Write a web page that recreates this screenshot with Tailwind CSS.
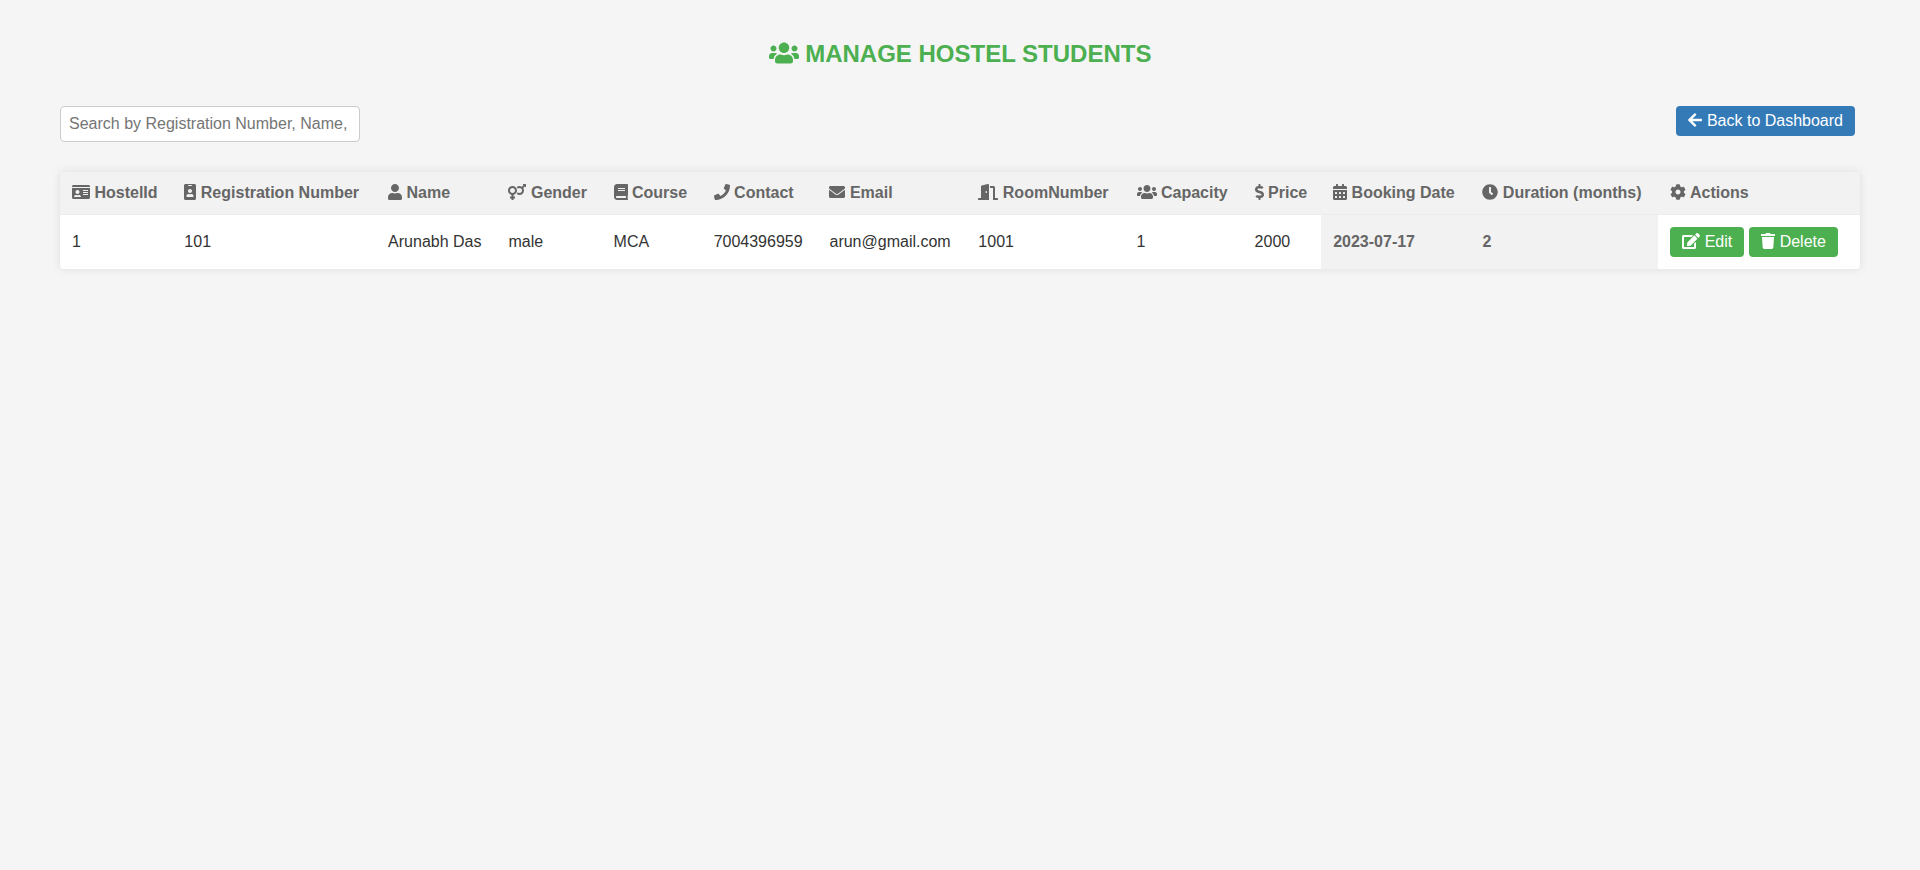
<!DOCTYPE html>
<html lang="en">
<head>
<meta charset="utf-8">
<title>Manage Hostel Students</title>
<script src="https://cdn.jsdelivr.net/npm/@tailwindcss/browser@4"></script>
</head>
<body class="min-h-screen bg-[#f5f5f5] px-[60px] pt-10 font-['Liberation_Sans',Arial,sans-serif] text-base leading-[18px] text-[#333]">
<svg class="hidden" aria-hidden="true">
<symbol id="users" viewBox="0 0 640 512"><path d="M96 224c35.3 0 64-28.7 64-64s-28.7-64-64-64-64 28.7-64 64 28.7 64 64 64zm448 0c35.3 0 64-28.7 64-64s-28.7-64-64-64-64 28.7-64 64 28.7 64 64 64zm32 32h-64c-17.6 0-33.5 7.1-45.1 18.6 40.3 22.1 68.9 62 75.1 109.4h66c17.7 0 32-14.3 32-32v-32c0-35.3-28.7-64-64-64zm-256 0c61.9 0 112-50.1 112-112S381.9 32 320 32 208 82.1 208 144s50.1 112 112 112zm76.8 32h-8.3c-20.8 10-43.9 16-68.5 16s-47.6-6-68.5-16h-8.3C179.6 288 128 339.6 128 403.2V432c0 26.5 21.5 48 48 48h288c26.5 0 48-21.5 48-48v-28.8c0-63.6-51.6-115.2-115.2-115.2zm-223.7-13.4C161.5 263.1 145.6 256 128 256H64c-35.3 0-64 28.7-64 64v32c0 17.7 14.3 32 32 32h65.9c6.3-47.4 34.9-87.3 75.2-109.4z"/></symbol>
<symbol id="id-card" viewBox="0 0 576 512"><path d="M528 32H48C21.5 32 0 53.5 0 80v16h576V80c0-26.5-21.5-48-48-48zM0 432c0 26.5 21.5 48 48 48h480c26.5 0 48-21.5 48-48V128H0v304zm352-232c0-4.400 3.600-8 8-8h144c4.400 0 8 3.600 8 8v16c0 4.400-3.600 8-8 8H360c-4.400 0-8-3.600-8-8v-16zm0 64c0-4.400 3.600-8 8-8h144c4.400 0 8 3.600 8 8v16c0 4.400-3.600 8-8 8H360c-4.400 0-8-3.600-8-8v-16zm0 64c0-4.400 3.600-8 8-8h144c4.400 0 8 3.600 8 8v16c0 4.400-3.600 8-8 8H360c-4.400 0-8-3.600-8-8v-16zM176 192c35.300 0 64 28.700 64 64s-28.700 64-64 64-64-28.700-64-64 28.700-64 64-64zM67.100 396.200C75.500 370.500 99.600 352 128 352h8.200c12.300 5.100 25.700 8 39.800 8s27.600-2.900 39.800-8h8.200c28.400 0 52.500 18.500 60.900 44.200 3.200 9.900-5.200 19.800-15.600 19.800H82.700c-10.400 0-18.800-10-15.600-19.800z"/></symbol>
<symbol id="id-badge" viewBox="0 0 384 512"><path d="M336 0H48C21.5 0 0 21.5 0 48v416c0 26.5 21.5 48 48 48h288c26.5 0 48-21.5 48-48V48c0-26.5-21.5-48-48-48zM144 32h96c8.800 0 16 7.200 16 16s-7.200 16-16 16h-96c-8.800 0-16-7.200-16-16s7.200-16 16-16zm48 128c35.300 0 64 28.700 64 64s-28.700 64-64 64-64-28.700-64-64 28.700-64 64-64zm112 236.800c0 10.600-10 19.200-22.400 19.200H102.400C90 416 80 407.400 80 396.800v-19.200c0-31.800 30.100-57.600 67.200-57.600h5c12.300 5.100 25.700 8 39.800 8s27.600-2.900 39.800-8h5c37.100 0 67.200 25.800 67.200 57.600v19.200z"/></symbol>
<symbol id="user" viewBox="0 0 448 512"><path d="M224 256c70.7 0 128-57.3 128-128S294.7 0 224 0 96 57.3 96 128s57.3 128 128 128zm89.6 32h-16.7c-22.2 10.2-46.9 16-72.9 16s-50.6-5.8-72.9-16h-16.7C60.2 288 0 348.2 0 422.4V464c0 26.5 21.5 48 48 48h352c26.5 0 48-21.5 48-48v-41.6c0-74.2-60.2-134.4-134.4-134.4z"/></symbol>
<symbol id="venus-mars" viewBox="0 0 576 512"><path d="M564 0h-79c-10.7 0-16 12.9-8.5 20.5l16.9 16.9-48.7 48.7C422.5 72.1 396.2 64 368 64c-33.7 0-64.6 11.6-89.2 30.9 14 16.7 25 36 32.1 57.1 14.5-14.8 34.7-24 57.1-24 44.1 0 80 35.9 80 80s-35.9 80-80 80c-22.3 0-42.6-9.2-57.1-24-7.1 21.1-18 40.4-32.1 57.1 24.5 19.4 55.5 30.9 89.2 30.9 79.5 0 144-64.5 144-144 0-28.2-8.1-54.500-22.100-76.700l48.700-48.700 16.900 16.900c2.400 2.400 5.400 3.500 8.400 3.500 6.200 0 12.100-4.800 12.100-12V12c0-6.600-5.400-12-12-12zM144 64C64.500 64 0 128.500 0 208c0 68.500 47.900 125.900 112 140.400V400H76c-6.600 0-12 5.400-12 12v40c0 6.600 5.400 12 12 12h36v36c0 6.600 5.400 12 12 12h40c6.600 0 12-5.400 12-12v-36h36c6.600 0 12-5.400 12-12v-40c0-6.600-5.400-12-12-12h-36v-51.600c64.100-14.600 112-71.900 112-140.400 0-79.500-64.500-144-144-144zm0 224c-44.100 0-80-35.900-80-80s35.900-80 80-80 80 35.900 80 80-35.900 80-80 80z"/></symbol>
<symbol id="book" viewBox="0 0 448 512"><path d="M448 360V24c0-13.300-10.700-24-24-24H96C43 0 0 43 0 96v320c0 53 43 96 96 96h328c13.300 0 24-10.700 24-24v-16c0-7.500-3.500-14.300-8.900-18.700-4.200-15.400-4.200-59.300 0-74.700 5.400-4.300 8.900-11.100 8.900-18.600zM128 134c0-3.300 2.700-6 6-6h212c3.300 0 6 2.700 6 6v20c0 3.300-2.700 6-6 6H134c-3.300 0-6-2.700-6-6v-20zm0 64c0-3.300 2.700-6 6-6h212c3.300 0 6 2.700 6 6v20c0 3.300-2.700 6-6 6H134c-3.300 0-6-2.700-6-6v-20zm253.400 250H96c-17.700 0-32-14.300-32-32 0-17.600 14.400-32 32-32h285.400c-1.900 17.100-1.900 46.900 0 64z"/></symbol>
<symbol id="phone" viewBox="0 0 512 512"><path d="M493.4 24.6l-104-24c-11.3-2.6-22.9 3.3-27.5 13.9l-48 112c-4.200 9.800-1.400 21.300 6.900 28l60.600 49.600c-36 76.700-98.900 140.500-177.200 177.200l-49.600-60.600c-6.800-8.300-18.200-11.100-28-6.900l-112 48C3.900 366.500-2 378.100.6 389.400l24 104C27.100 504.200 36.700 512 48 512c256.100 0 464-207.500 464-464 0-11.200-7.700-20.900-18.600-23.400z"/></symbol>
<symbol id="envelope" viewBox="0 0 512 512"><path d="M502.3 190.8c3.9-3.1 9.7-.2 9.7 4.7V400c0 26.5-21.5 48-48 48H48c-26.5 0-48-21.5-48-48V195.6c0-5 5.7-7.8 9.7-4.700 22.400 17.400 52.100 39.500 154.100 113.600 21.100 15.400 56.700 47.800 92.200 47.600 35.700.3 72-32.800 92.300-47.600 102-74.100 131.600-96.300 154-113.700zM256 320c23.200.4 56.600-29.200 73.400-41.400 132.700-96.300 142.800-104.700 173.400-128.700 5.800-4.500 9.200-11.500 9.200-18.900v-19c0-26.500-21.500-48-48-48H48c-26.500 0-48 21.500-48 48v19c0 7.400 3.400 14.300 9.200 18.900 30.600 23.900 40.700 32.400 173.400 128.700 16.800 12.200 50.200 41.800 73.400 41.400z"/></symbol>
<symbol id="door-open" viewBox="0 0 640 512"><path d="M624 448h-80V113.450C544 86.190 522.470 64 496 64H384v64h96v384h144c8.840 0 16-7.160 16-16v-32c0-8.840-7.160-16-16-16zM312.240 1.010l-192 49.740C105.990 54.440 96 67.700 96 82.920V448H16c-8.840 0-16 7.160-16 16v32c0 8.840 7.160 16 16 16h336V33.180c0-21.580-19.560-37.410-39.760-32.170zM264 288c-13.250 0-24-14.330-24-32s10.750-32 24-32 24 14.330 24 32-10.750 32-24 32z"/></symbol>
<symbol id="dollar" viewBox="0 0 288 512"><path d="M209.2 233.4l-108-31.6C88.7 198.2 80 186.5 80 173.5c0-16.3 13.2-29.5 29.5-29.5h66.3c12.2 0 24.2 3.7 34.2 10.5 6.1 4.1 14.3 3.1 19.5-2l34.8-34c7.1-6.9 6.1-18.4-1.8-24.5C238 74.8 207.4 64.1 176 64V16c0-8.800-7.200-16-16-16h-32c-8.800 0-16 7.200-16 16v48h-2.500C45.800 64-5.400 118.700.5 183.600c4.200 46.100 39.400 83.600 83.800 96.600l102.500 30c12.500 3.700 21.200 15.300 21.200 28.300 0 16.300-13.200 29.500-29.500 29.500h-66.300C100 368 88 364.300 78 357.500c-6.100-4.100-14.300-3.100-19.500 2l-34.800 34c-7.100 6.900-6.100 18.400 1.800 24.500 24.500 19.200 55.100 29.900 86.500 30v48c0 8.800 7.200 16 16 16h32c8.800 0 16-7.200 16-16v-48.200c46.600-.9 90.300-28.600 105.700-72.700 21.500-61.600-14.600-124.800-72.500-141.700z"/></symbol>
<symbol id="calendar" viewBox="0 0 448 512"><path fill-rule="evenodd" d="M0 464c0 26.500 21.500 48 48 48h352c26.500 0 48-21.500 48-48V192H0zM76 256h40q12 0 12 12v40q0 12-12 12H76q-12 0-12-12v-40q0-12 12-12zM204 256h40q12 0 12 12v40q0 12-12 12h-40q-12 0-12-12v-40q0-12 12-12zM332 256h40q12 0 12 12v40q0 12-12 12h-40q-12 0-12-12v-40q0-12 12-12zM76 384h40q12 0 12 12v40q0 12-12 12H76q-12 0-12-12v-40q0-12 12-12zM204 384h40q12 0 12 12v40q0 12-12 12h-40q-12 0-12-12v-40q0-12 12-12zM332 384h40q12 0 12 12v40q0 12-12 12h-40q-12 0-12-12v-40q0-12 12-12zM400 64h-48V16c0-8.800-7.200-16-16-16h-32c-8.800 0-16 7.200-16 16v48H160V16c0-8.800-7.200-16-16-16h-32c-8.800 0-16 7.200-16 16v48H48C21.500 64 0 85.500 0 112v48h448v-48c0-26.500-21.500-48-48-48z"/></symbol>
<symbol id="clock" viewBox="0 0 512 512"><path d="M256,8C119,8,8,119,8,256S119,504,256,504,504,393,504,256,393,8,256,8Zm92.490,313h0l-20,25a16,16,0,0,1-22.490,2.500h0l-67-49.720a40,40,0,0,1-15-31.230V112a16,16,0,0,1,16-16h32a16,16,0,0,1,16,16V256l58,42.500A16,16,0,0,1,348.490,321Z"/></symbol>
<symbol id="cog" viewBox="0 0 512 512"><path d="M487.4 315.7l-42.6-24.6c4.3-23.2 4.3-47 0-70.2l42.6-24.6c4.900-2.800 7.100-8.600 5.500-14-11.100-35.600-30-67.800-54.700-94.600-3.800-4.100-10-5.100-14.800-2.300L380.800 110c-17.900-15.400-38.500-27.300-60.800-35.100V25.800c0-5.600-3.900-10.500-9.400-11.700-36.700-8.200-74.300-7.800-109.200 0-5.500 1.200-9.400 6.100-9.400 11.700V75c-22.200 7.900-42.800 19.800-60.800 35.100L88.700 85.500c-4.900-2.800-11-1.900-14.800 2.300-24.700 26.700-43.600 58.900-54.700 94.600-1.700 5.400.6 11.200 5.500 14L67.300 221c-4.300 23.200-4.300 47 0 70.200l-42.600 24.600c-4.900 2.800-7.100 8.600-5.500 14 11.100 35.600 30 67.800 54.700 94.600 3.800 4.100 10 5.100 14.800 2.300l42.600-24.600c17.900 15.400 38.500 27.300 60.800 35.100v49.200c0 5.600 3.900 10.500 9.400 11.700 36.700 8.200 74.300 7.800 109.200 0 5.500-1.200 9.400-6.100 9.400-11.700v-49.200c22.200-7.900 42.800-19.800 60.800-35.100l42.600 24.600c4.900 2.800 11 1.900 14.800-2.300 24.700-26.700 43.600-58.900 54.700-94.600 1.500-5.500-.7-11.300-5.600-14.100zM256 336c-44.100 0-80-35.900-80-80s35.900-80 80-80 80 35.900 80 80-35.900 80-80 80z"/></symbol>
<symbol id="edit" viewBox="0 0 576 512"><path d="M402.6 83.2l90.2 90.2c3.8 3.8 3.8 10 0 13.8L274.4 405.6l-92.8 10.3c-12.4 1.4-22.9-9.1-21.500-21.500l10.300-92.800L388.800 83.200c3.800-3.800 10-3.800 13.800 0zm162-22.900l-48.800-48.800c-15.200-15.200-39.900-15.200-55.200 0l-35.400 35.400c-3.800 3.800-3.800 10 0 13.800l90.200 90.200c3.800 3.800 10 3.800 13.800 0l35.400-35.400c15.200-15.300 15.200-40 0-55.200zM384 346.200V448H64V128h229.800c3.200 0 6.200-1.300 8.500-3.500l40-40c7.600-7.600 2.200-20.500-8.500-20.500H48C21.500 64 0 85.500 0 112v352c0 26.500 21.500 48 48 48h352c26.500 0 48-21.500 48-48V306.200c0-10.700-12.900-16-20.500-8.500l-40 40c-2.200 2.300-3.500 5.300-3.500 8.500z"/></symbol>
<symbol id="trash" viewBox="0 0 448 512"><path d="M432 32H312l-9.400-18.700A24 24 0 0 0 281.100 0H166.800a23.720 23.720 0 0 0-21.400 13.300L136 32H16A16 16 0 0 0 0 48v32a16 16 0 0 0 16 16h416a16 16 0 0 0 16-16V48a16 16 0 0 0-16-16zM53.200 467a48 48 0 0 0 47.900 45h245.800a48 48 0 0 0 47.900-45L416 128H32z"/></symbol>
<symbol id="arrow-left" viewBox="0 0 448 512"><path d="M257.5 445.1l-22.2 22.2c-9.4 9.4-24.6 9.4-33.9 0L7 273c-9.4-9.4-9.4-24.6 0-33.9L201.4 44.7c9.4-9.4 24.6-9.4 33.9 0l22.2 22.2c9.5 9.5 9.3 25-.4 34.3L136.600 216H424c13.300 0 24 10.700 24 24v32c0 13.300-10.700 24-24 24H136.600l120.500 114.800c9.800 9.300 10 24.800.4 34.300z"/></symbol>
</svg>

<h1 class="text-center text-2xl leading-7 font-bold text-[#4caf50] uppercase"><svg class="inline-block h-6 w-[30px] fill-current align-[-0.125em]"><use href="#users"/></svg> Manage Hostel Students</h1>

<div class="mt-[38px] flex items-start justify-between pr-[5px]">
  <input type="text" aria-label="Search students" placeholder="Search by Registration Number, Name, Course" class="h-9 w-[300px] rounded border border-[#ccc] bg-white px-2 placeholder:text-[#757575]">
  <a href="#" class="rounded bg-[#337ab7] px-3 py-1.5 text-white"><svg class="inline-block h-4 w-3.5 fill-current align-[-0.125em]"><use href="#arrow-left"/></svg> Back to Dashboard</a>
</div>

<table class="mt-[30px] w-full border-collapse rounded bg-white text-left whitespace-nowrap shadow-[0_0_10px_rgba(0,0,0,0.1)] [&_svg]:inline-block [&_svg]:h-4 [&_svg]:fill-current [&_svg]:align-[-0.125em] [&_td]:p-3 [&_th]:bg-[#f2f2f2] [&_th]:p-3 [&_th]:text-[#666]">
  <thead>
    <tr class="border-b border-[#ececec]">
      <th scope="col"><svg class="w-[18px]"><use href="#id-card"/></svg> HostelId</th>
      <th scope="col"><svg class="w-3"><use href="#id-badge"/></svg> Registration Number</th>
      <th scope="col"><svg class="w-3.5"><use href="#user"/></svg> Name</th>
      <th scope="col"><svg class="w-[18px]"><use href="#venus-mars"/></svg> Gender</th>
      <th scope="col"><svg class="w-3.5"><use href="#book"/></svg> Course</th>
      <th scope="col"><svg class="w-4"><use href="#phone"/></svg> Contact</th>
      <th scope="col"><svg class="w-4"><use href="#envelope"/></svg> Email</th>
      <th scope="col"><svg class="w-5"><use href="#door-open"/></svg> RoomNumber</th>
      <th scope="col"><svg class="w-5"><use href="#users"/></svg> Capacity</th>
      <th scope="col"><svg class="w-[9px]"><use href="#dollar"/></svg> Price</th>
      <th scope="col"><svg class="w-3.5"><use href="#calendar"/></svg> Booking Date</th>
      <th scope="col"><svg class="w-4"><use href="#clock"/></svg> Duration (months)</th>
      <th scope="col"><svg class="w-4"><use href="#cog"/></svg> Actions</th>
    </tr>
  </thead>
  <tbody>
    <tr>
      <td>1</td>
      <td>101</td>
      <td>Arunabh Das</td>
      <td>male</td>
      <td>MCA</td>
      <td>7004396959</td>
      <td>arun@gmail.com</td>
      <td>1001</td>
      <td>1</td>
      <td>2000</td>
      <th>2023-07-17</th>
      <th>2</th>
      <td>
        <div class="flex gap-[5px] pr-[5px]">
          <button type="button" class="rounded bg-[#4caf50] px-3 py-1.5 text-white"><svg class="w-[18px]"><use href="#edit"/></svg> Edit</button>
          <button type="button" class="rounded bg-[#4caf50] px-3 py-1.5 text-white"><svg class="w-3.5"><use href="#trash"/></svg> Delete</button>
        </div>
      </td>
    </tr>
  </tbody>
</table>
</body>
</html>
